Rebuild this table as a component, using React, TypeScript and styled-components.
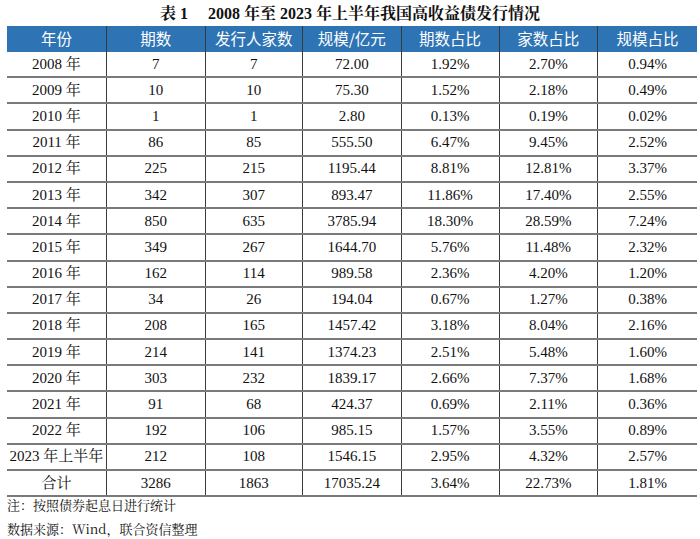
import React from "react";
import styled, { createGlobalStyle } from "styled-components";

const Global = createGlobalStyle`
  html, body { margin: 0; padding: 0; background: #ffffff; }
  body { font-family: "Liberation Serif", "Noto Serif CJK SC", "Noto Sans CJK SC", serif; color: #111; }
`;

const Page = styled.div`
  width: 700px;
  padding: 0 3px 0 7px;
  box-sizing: border-box;
  display: flex;
  flex-direction: column;
`;

const Title = styled.div`
  flex-shrink: 0;
  height: 26px;
  line-height: 28px;
  text-align: center;
  font-weight: bold;
  font-size: 16px;
  margin-left: -4px;
  font-family: "Liberation Serif", "Noto Serif CJK SC", "Noto Sans CJK SC", serif;
  white-space: pre;
`;

const Row = styled.div<{ $header?: boolean }>`
  flex-shrink: 0;
  display: grid;
  grid-template-columns: 99px 98.5px 97.5px 98.5px 98px 98.5px 1fr;
  box-sizing: border-box;
  height: ${(p) => (p.$header ? "26px" : "26.2px")};
  background: ${(p) => (p.$header ? "#2e74b5" : "#ffffff")};
  color: ${(p) => (p.$header ? "#ffffff" : "#111111")};
  border-bottom: ${(p) => (p.$header ? "none" : "2px solid #7a7a7a")};
  font-family: ${(p) =>
    p.$header
      ? '"Noto Sans CJK SC", "Liberation Sans", sans-serif'
      : '"Liberation Serif", "Noto Serif CJK SC", "Noto Sans CJK SC", serif'};
  font-size: ${(p) => (p.$header ? "15.5px" : "15px")};
`;

const Cell = styled.div<{ $first?: boolean }>`
  display: flex;
  align-items: center;
  justify-content: center;
  border-left: ${(p) => (p.$first ? "none" : "1px solid #3a3a3a")};
  white-space: pre;
  line-height: 1;
`;

const Notes = styled.div`
  flex-shrink: 0;
  display: flex;
  flex-direction: column;
  gap: 8px;
  padding-top: 0;
  font-size: 13px;
  font-family: "Noto Serif CJK SC", "Noto Sans CJK SC", "Liberation Serif", serif;
  color: #111;
  line-height: 16px;
`;

const headers = ["年份", "期数", "发行人家数", "规模/亿元", "期数占比", "家数占比", "规模占比"];

const data: string[][] = [
  ["2008 年", "7", "7", "72.00", "1.92%", "2.70%", "0.94%"],
  ["2009 年", "10", "10", "75.30", "1.52%", "2.18%", "0.49%"],
  ["2010 年", "1", "1", "2.80", "0.13%", "0.19%", "0.02%"],
  ["2011 年", "86", "85", "555.50", "6.47%", "9.45%", "2.52%"],
  ["2012 年", "225", "215", "1195.44", "8.81%", "12.81%", "3.37%"],
  ["2013 年", "342", "307", "893.47", "11.86%", "17.40%", "2.55%"],
  ["2014 年", "850", "635", "3785.94", "18.30%", "28.59%", "7.24%"],
  ["2015 年", "349", "267", "1644.70", "5.76%", "11.48%", "2.32%"],
  ["2016 年", "162", "114", "989.58", "2.36%", "4.20%", "1.20%"],
  ["2017 年", "34", "26", "194.04", "0.67%", "1.27%", "0.38%"],
  ["2018 年", "208", "165", "1457.42", "3.18%", "8.04%", "2.16%"],
  ["2019 年", "214", "141", "1374.23", "2.51%", "5.48%", "1.60%"],
  ["2020 年", "303", "232", "1839.17", "2.66%", "7.37%", "1.68%"],
  ["2021 年", "91", "68", "424.37", "0.69%", "2.11%", "0.36%"],
  ["2022 年", "192", "106", "985.15", "1.57%", "3.55%", "0.89%"],
  ["2023 年上半年", "212", "108", "1546.15", "2.95%", "4.32%", "2.57%"],
  ["合计", "3286", "1863", "17035.24", "3.64%", "22.73%", "1.81%"],
];

export default function App() {
  return (
    <>
      <Global />
      <Page>
        <Title>{"表 1　 2008 年至 2023 年上半年我国高收益债发行情况"}</Title>
        <Row $header>
          {headers.map((h, i) => (
            <Cell key={h} $first={i === 0}>
              {h}
            </Cell>
          ))}
        </Row>
        {data.map((r, ri) => (
          <Row key={ri}>
            {r.map((c, ci) => (
              <Cell key={ci} $first={ci === 0}>
                {c}
              </Cell>
            ))}
          </Row>
        ))}
        <Notes>
          <div>注：按照债券起息日进行统计</div>
          <div>数据来源：Wind，联合资信整理</div>
        </Notes>
      </Page>
    </>
  );
}
